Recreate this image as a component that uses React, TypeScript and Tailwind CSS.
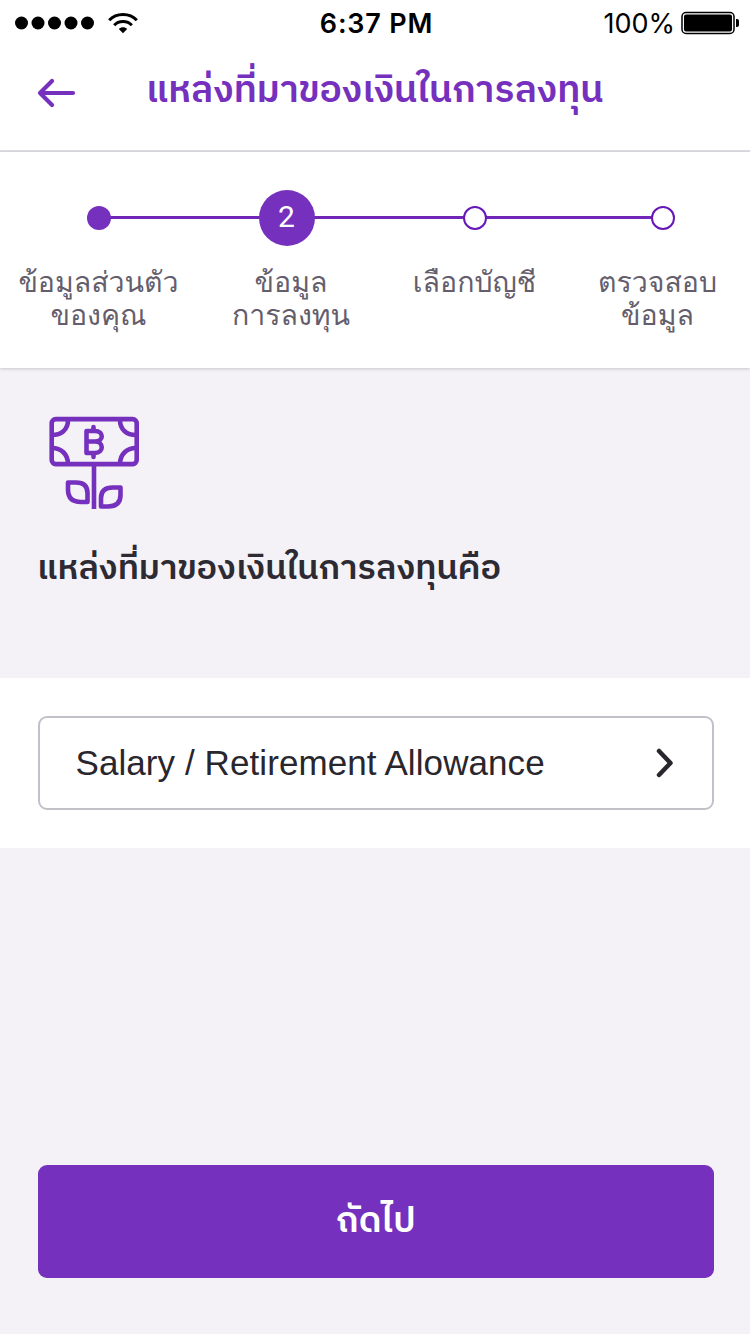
import type { ReactNode } from "react";

const thaiHeading = "font-['IBM_Plex_Sans_Thai','Noto_Sans_Thai',sans-serif]";
const thaiLabel = "font-['Loma','Noto_Sans',sans-serif]";

function StatusBar() {
  return (
    <div className="grid h-[46px] grid-cols-3 items-center font-['Inter',sans-serif] text-black">
      <div className="flex items-center pl-[15px]">
        <svg width="80" height="14" viewBox="0 0 80 14">
          {[6.5, 23, 39.5, 56, 72.5].map((x) => (
            <circle key={x} cx={x} cy="7" r="6.5" />
          ))}
        </svg>
        <svg className="ml-[13px]" width="30" height="22" viewBox="0 0 30 22" fill="none" stroke="black">
          <path d="M1.2 8.2C8.4.5 21.6.5 28.8 8.2" strokeWidth="3" />
          <path d="M6.2 13.2C10.7 8.2 19.3 8.2 23.8 13.2" strokeWidth="3" />
          <path d="M10.8 16.9C13 14.6 17 14.6 19.2 16.9L15 21.2Z" fill="black" stroke="none" />
        </svg>
      </div>
      <div className="pl-[3px] text-center text-[27px] font-semibold leading-none tracking-[0.8px]">6:37 PM</div>
      <div className="flex items-center justify-end pr-[10px]">
        <span className="text-[27px] leading-none">100%</span>
        <svg className="ml-[6px]" width="59" height="24" viewBox="0 0 59 24">
          <rect x="1" y="1.5" width="52" height="21" rx="4" fill="none" stroke="black" strokeWidth="1.5" />
          <rect x="3" y="3.5" width="48" height="17" rx="2" />
          <path d="M55 8H56Q58 8 58 10V14Q58 16 56 16H55Z" />
        </svg>
      </div>
    </div>
  );
}

function Step({ dot, labelClass = "", children }: { dot: ReactNode; labelClass?: string; children: ReactNode }) {
  return (
    <li className="flex w-[188px] shrink-0 flex-col items-center">
      <div className="flex h-14 items-center">{dot}</div>
      <div className={`mt-[20.5px] whitespace-nowrap text-center text-[28.5px] leading-[33px] text-[#645e6c] ${thaiLabel} ${labelClass}`}>{children}</div>
    </li>
  );
}

function Stepper() {
  const hollow = <span className="z-10 size-6 rounded-full border-[2px] border-[#6717b8] bg-white" />;
  return (
    <section className="relative z-10 h-[216px] shrink-0 bg-white pt-[37.5px] shadow-[0_1px_3px_rgba(70,60,90,0.25)]">
      <div className="absolute left-[98px] top-[64px] h-[3px] w-[564px] bg-[#7126b7]" />
      <ol className="relative ml-[4.5px] flex">
        <Step dot={<span className="size-6 rounded-full bg-[#7630be]" />}>
          ข้อมูลส่วนตัว
          <br />
          ของคุณ
        </Step>
        <Step
          labelClass="pl-[9px]"
          dot={
            <span className="flex size-14 items-center justify-center rounded-full bg-[#7630be] pb-[2px] font-['Roboto',sans-serif] text-[30px] text-white">2</span>
          }
        >
          ข้อมูล
          <br />
          การลงทุน
        </Step>
        <Step dot={hollow}>เลือกบัญชี</Step>
        <Step dot={hollow} labelClass="pr-[10px]">
          ตรวจสอบ
          <br />
          ข้อมูล
        </Step>
      </ol>
    </section>
  );
}

function MoneyPlant() {
  return (
    <svg width="92" height="94" viewBox="0 0 92 94" fill="none" stroke="#7630be" strokeWidth="4.6">
      <rect x="3.7" y="3.1" width="85" height="45" rx="4" />
      <path d="M20 4C20 14 13 19 4 19M72 4C72 14 79 19 88 19M20 48C20 38 13 32 4 32M72 48C72 38 79 32 88 32" />
      <path d="M38.5 15H47C56 15 56 25.5 47 25.5C56 25.5 56 37 47 37H38.5ZM39 25.5H47" strokeLinejoin="round" />
      <path d="M45.5 11V14M45.5 38V41" strokeLinecap="round" />
      <path d="M46 49V93" />
      <path d="M20 66.500H28Q39.500 66.500 39.500 77V86H33Q20 86 20 73.500ZM72.500 71.500H65Q53 71.500 53 82V90.500H60Q72.500 90.500 72.500 79Z" strokeLinejoin="round" />
    </svg>
  );
}

export default function App() {
  return (
    <div className="flex h-[1334px] w-[750px] flex-col overflow-hidden bg-[#f4f2f6]">
      <header className="flex h-[152px] shrink-0 flex-col border-b-2 border-[#dedce3] bg-white">
        <StatusBar />
        <div className="flex pl-[37px] pt-[30px]">
          <svg className="mt-[2px] shrink-0" width="40" height="30" viewBox="0 0 40 30" fill="none" stroke="#7630be" strokeWidth="4.2" strokeLinecap="round" strokeLinejoin="round">
            <path d="M36 15H3M15 3L3 15L15 27" />
          </svg>
          <h1 className={`ml-[69px] whitespace-nowrap text-[37.3px] font-semibold leading-[30px] text-[#7630be] ${thaiHeading}`}>แหล่งที่มาของเงินในการลงทุน</h1>
        </div>
      </header>
      <Stepper />
      <section className="h-[310px] shrink-0 px-[37px] pt-[48px]">
        <div className="ml-[11px]">
          <MoneyPlant />
        </div>
        <h2 className={`mt-[37px] whitespace-nowrap text-[34.3px] font-semibold leading-[44px] text-[#2d2a33] ${thaiHeading}`}>แหล่งที่มาของเงินในการลงทุนคือ</h2>
      </section>
      <section className="h-[170px] shrink-0 bg-white pl-[37.5px] pr-9 pt-[38px]">
        <button className="flex h-[94px] w-full items-center justify-between rounded-[9px] border-[2px] border-[#c3c0c9] pl-[36px] pr-[37px] font-['Liberation_Sans',sans-serif] text-[35px] text-[#29262e]">
          <span className="whitespace-nowrap tracking-[0.08px]">Salary / Retirement Allowance</span>
          <svg width="20" height="30" viewBox="0 0 20 30" fill="none" stroke="#29262e" strokeWidth="4.5" strokeLinecap="round" strokeLinejoin="round">
            <path d="M4 3L15.5 15L4 27" />
          </svg>
        </button>
      </section>
      <div className="mt-auto pb-[56.5px] pl-[37.5px] pr-9">
        <button className={`flex h-[113px] w-full items-center justify-center rounded-[9px] bg-[#7630be] pt-[2px] text-[36px] font-semibold text-white ${thaiHeading}`}>ถัดไป</button>
      </div>
    </div>
  );
}
